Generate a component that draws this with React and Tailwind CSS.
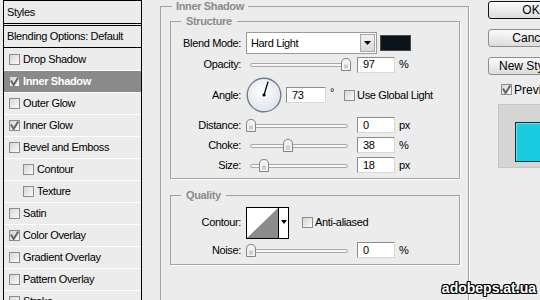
import React from 'react';

const styleItems = [
  { name: 'Drop Shadow' },
  { name: 'Inner Shadow', on: true, active: true },
  { name: 'Outer Glow' },
  { name: 'Inner Glow', on: true },
  { name: 'Bevel and Emboss' },
  { name: 'Contour', sub: true },
  { name: 'Texture', sub: true },
  { name: 'Satin' },
  { name: 'Color Overlay', on: true },
  { name: 'Gradient Overlay' },
  { name: 'Pattern Overlay' },
  { name: 'Stroke' },
];

function Check({ on }) {
  return (
    <span className="flex h-[11px] w-[11px] shrink-0 items-center justify-center border border-[#8c8c8c] bg-linear-to-br from-[#d6d6d6] to-[#fbfbfb]">
      {on && (
        <svg width="9" height="9" viewBox="0 0 9 9">
          <path d="M1 3.5 L3.6 8 L8.2 0.6" fill="none" stroke="#666" strokeWidth="2" />
        </svg>
      )}
    </span>
  );
}

function Slider({ pos }) {
  return (
    <div className="relative h-[13px] w-[106px] shrink-0">
      <div className="absolute left-[4px] right-[4px] top-[5px] h-[4px] rounded-full border border-[#a8a8a8] bg-[#f7f7f7]" />
      <svg className="absolute top-0" style={{ left: pos }} width="10" height="13" viewBox="0 0 10 13">
        <path d="M0.5 12.5 V5 Q0.5 0.5 5 0.5 Q9.5 0.5 9.5 5 V12.5 Z" fill="#f3f3f3" stroke="#858585" />
        <rect x="3" y="6.5" width="4" height="4" fill="#cdcdcd" />
      </svg>
    </div>
  );
}

function Field({ value, wide }) {
  return (
    <div
      className={`flex h-[16px] shrink-0 items-center border border-[#8c8c8c] border-r-[#d8d8d8] border-b-[#d8d8d8] bg-white pl-[5px] ${
        wide ? 'w-[40px]' : 'w-[38px]'
      }`}
    >
      {value}
    </div>
  );
}

function Row({ label, h, children }) {
  return (
    <div className={`flex items-center ${h}`}>
      <div className="w-[70px] shrink-0 text-right">{label}</div>
      <div className="ml-[5px] flex items-center">{children}</div>
    </div>
  );
}

function SliderRow({ label, pos, value, unit, h = 'h-[20px]' }) {
  return (
    <Row label={label} h={h}>
      <Slider pos={pos} />
      <div className="ml-[5px]">
        <Field value={value} />
      </div>
      <span className="ml-[4px]">{unit}</span>
    </Row>
  );
}

function Dial() {
  const a = (73 * Math.PI) / 180;
  return (
    <svg width="36" height="36" viewBox="0 0 36 36">
      <defs>
        <radialGradient id="dial" cx="45%" cy="40%" r="65%">
          <stop offset="0" stopColor="#ffffff" />
          <stop offset="1" stopColor="#dde1e8" />
        </radialGradient>
      </defs>
      <circle cx="18" cy="18" r="16.8" fill="url(#dial)" stroke="#6d7c96" strokeWidth="1.4" />
      <line x1="18" y1="18" x2={18 + Math.cos(a) * 14} y2={18 - Math.sin(a) * 14} stroke="#000" strokeWidth="1.3" />
      <circle cx="18" cy="18" r="1.6" fill="#000" />
    </svg>
  );
}

function Button({ children, primary }) {
  return (
    <div
      className={`flex h-[18px] w-[86px] shrink-0 items-center justify-center rounded-[3px] border bg-linear-to-b from-[#fbfbfb] to-[#dcdcdc] text-[12px] tracking-normal ${
        primary ? 'border-[#111]' : 'border-[#8e8e8e]'
      }`}
    >
      {children}
    </div>
  );
}

export default function App() {
  return (
    <div className="relative flex h-[300px] w-[540px] overflow-hidden bg-[#ececec] font-['Liberation_Sans',Arial,sans-serif] text-[11px] leading-none tracking-[-0.35px] text-black">
      {/* styles list */}
      <div className="ml-[3px] h-[320px] w-[139px] shrink-0 border border-b-0 border-black">
        <div className="flex h-[23px] items-center border-b border-black pl-[3px]">Styles</div>
        <div className="h-[1px]" />
        <div className="flex h-[23px] items-center border-y border-black pl-[3px]">Blending Options: Default</div>
        {styleItems.map((s, i) => (
          <div
            key={s.name}
            className={`flex h-[22px] items-center ${i > 0 ? 'border-t border-white' : ''} ${
              s.sub ? 'pl-[19px]' : 'pl-[5px]'
            } ${s.active ? 'bg-[#8a8a8a] font-bold text-white' : ''}`}
          >
            <Check on={s.on} />
            <span className="ml-[3px]">{s.name}</span>
          </div>
        ))}
      </div>

      {/* settings */}
      <fieldset className="ml-[18px] h-[330px] w-[309px] shrink-0 border border-[#a3a3a3] pl-[9px] pr-[8px] shadow-[1px_1px_0_#fff]">
        <legend className="ml-[2px] px-[4px] text-[11px] leading-[12px] font-bold text-[#8b8b8b]">Inner Shadow</legend>

        <fieldset className="mt-[3px] border border-[#a3a3a3] pt-[5px] pb-[3px] shadow-[1px_1px_0_#fff]">
          <legend className="ml-[10px] px-[5px] text-[11px] leading-[12px] font-bold text-[#8b8b8b]">Structure</legend>

          <Row label="Blend Mode:" h="h-[22px]">
            <div className="flex h-[22px] w-[131px] items-center border border-[#9a9a9a] bg-white pl-[4px]">
              Hard Light
              <div className="mr-[1px] ml-auto flex h-[18px] w-[15px] items-center justify-center border border-[#a6a6a6] bg-linear-to-b from-[#f2f2f2] to-[#d8d8d8]">
                <svg width="7" height="4" viewBox="0 0 7 4">
                  <path d="M0 0 H7 L3.5 4 Z" fill="#000" />
                </svg>
              </div>
            </div>
            <div className="ml-[3px] h-[16px] w-[31px] border border-[#4a4a4a] bg-[#0a141a]" />
          </Row>

          <SliderRow label="Opacity:" pos={95} value="97" unit="%" h="h-[21px]" />

          <Row label="Angle:" h="h-[40px]">
            <Dial />
            <div className="ml-[4px]">
              <Field value="73" wide />
            </div>
            <span className="ml-[4px] -mt-[6px]">°</span>
            <div className="ml-[10px]">
              <Check />
            </div>
            <span className="ml-[2px]">Use Global Light</span>
          </Row>

          <SliderRow label="Distance:" pos={0} value="0" unit="px" />
          <SliderRow label="Choke:" pos={37} value="38" unit="%" />
          <SliderRow label="Size:" pos={13} value="18" unit="px" />
        </fieldset>

        <fieldset className="mt-[10px] border border-[#a3a3a3] pt-[4px] pb-[4px] shadow-[1px_1px_0_#fff]">
          <legend className="ml-[10px] px-[5px] text-[11px] leading-[12px] font-bold text-[#8b8b8b]">Quality</legend>

          <Row label="Contour:" h="h-[35px]">
            <div className="flex h-[32px] w-[43px] border border-black bg-white">
              <svg width="31" height="30" viewBox="0 0 31 30">
                <path d="M0 30 L31 0 V30 Z" fill="#8c8c8c" />
              </svg>
              <div className="flex flex-1 justify-center border-l border-black pt-[12px]">
                <svg width="6" height="4" viewBox="0 0 6 4">
                  <path d="M0 0 H6 L3 4 Z" fill="#000" />
                </svg>
              </div>
            </div>
            <div className="ml-[13px]">
              <Check />
            </div>
            <span className="ml-[2px]">Anti-aliased</span>
          </Row>

          <SliderRow label="Noise:" pos={0} value="0" unit="%" />
        </fieldset>
      </fieldset>

      {/* buttons */}
      <div className="ml-[19px] flex w-[86px] shrink-0 flex-col">
        <div className="mt-[1px]">
          <Button primary>OK</Button>
        </div>
        <div className="mt-[10px]">
          <Button>Cancel</Button>
        </div>
        <div className="mt-[10px]">
          <Button>New Style...</Button>
        </div>
        <div className="mt-[9px] flex h-[11px] items-center pl-[13px]">
          <Check on />
          <span className="ml-[2px] text-[12px] tracking-normal">Preview</span>
        </div>
        <div className="mt-[9px] ml-[10px] h-[64px] w-[80px] border border-[#c6c6c6] bg-[#d5d5d5] pt-[17px] pl-[16px]">
          <div className="h-[40px] w-[60px] border border-[#0b2f36] bg-[#1bcbe0] shadow-[inset_1px_1px_0_#6fe4f0]" />
        </div>
      </div>

      <div className="absolute right-[4px] bottom-[5px] text-[14px] font-bold tracking-normal text-white [text-shadow:1px_0_0_#000,-1px_0_0_#000,0_1px_0_#000,0_-1px_0_#000,1px_1px_0_#000,-1px_-1px_0_#000,1px_-1px_0_#000,-1px_1px_0_#000]">
        adobeps.at.ua
      </div>
    </div>
  );
}
